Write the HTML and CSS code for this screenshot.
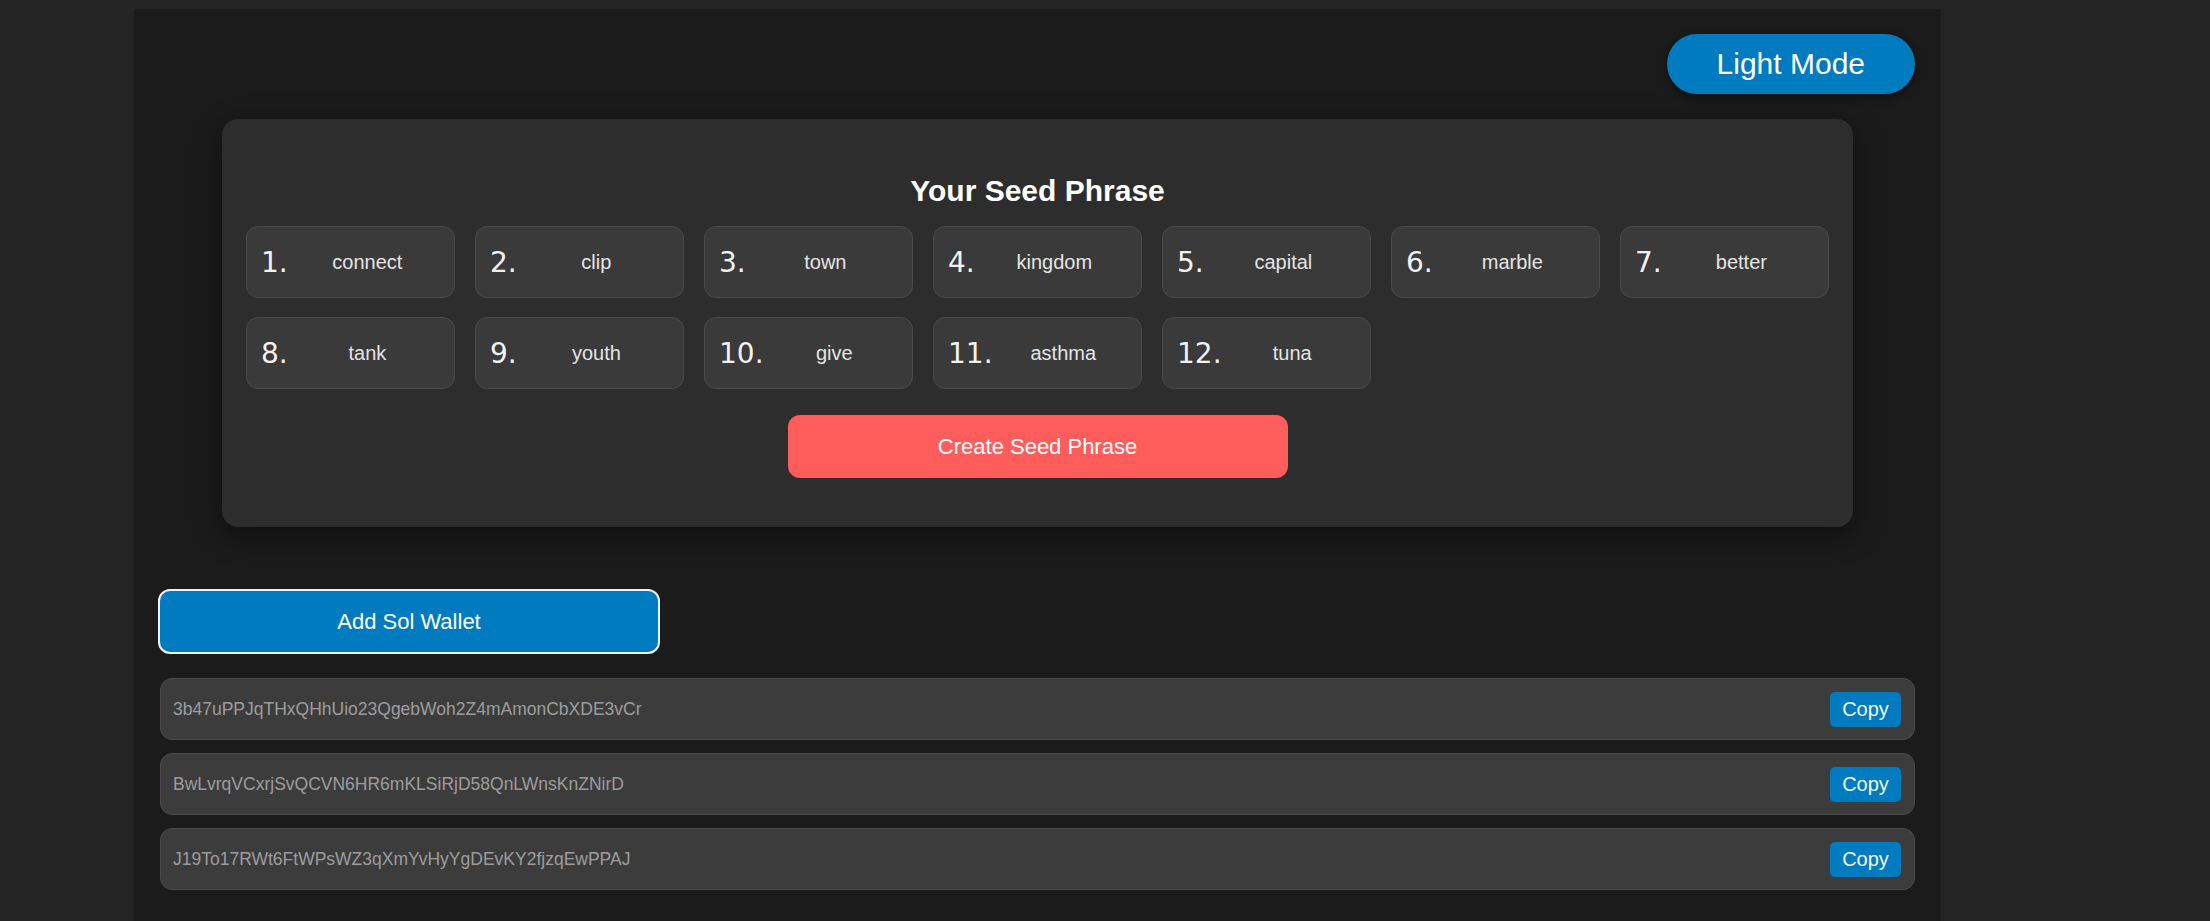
FILE: index.html
```html
<!DOCTYPE html>
<html lang="en">
<head>
<meta charset="utf-8">
<title>Seed Phrase Wallet</title>
<link rel="stylesheet" href="styles.css">
</head>
<body>
<div class="app">
  <div class="topbar">
    <button class="mode-btn">Light Mode</button>
  </div>

  <section class="card">
    <h2 class="title">Your Seed Phrase</h2>
    <div class="grid">
      <div class="word"><span class="num">1.</span><span class="text">connect</span></div>
      <div class="word"><span class="num">2.</span><span class="text">clip</span></div>
      <div class="word"><span class="num">3.</span><span class="text">town</span></div>
      <div class="word"><span class="num">4.</span><span class="text">kingdom</span></div>
      <div class="word"><span class="num">5.</span><span class="text">capital</span></div>
      <div class="word"><span class="num">6.</span><span class="text">marble</span></div>
      <div class="word"><span class="num">7.</span><span class="text">better</span></div>
      <div class="word"><span class="num">8.</span><span class="text">tank</span></div>
      <div class="word"><span class="num">9.</span><span class="text">youth</span></div>
      <div class="word"><span class="num">10.</span><span class="text">give</span></div>
      <div class="word"><span class="num">11.</span><span class="text">asthma</span></div>
      <div class="word"><span class="num">12.</span><span class="text">tuna</span></div>
    </div>
    <button class="create-btn">Create Seed Phrase</button>
  </section>

  <section class="wallets">
    <button class="add-btn">Add Sol Wallet</button>
    <div class="addr-list">
      <div class="addr-row"><span class="addr">3b47uPPJqTHxQHhUio23QgebWoh2Z4mAmonCbXDE3vCr</span><button class="copy-btn">Copy</button></div>
      <div class="addr-row"><span class="addr">BwLvrqVCxrjSvQCVN6HR6mKLSiRjD58QnLWnsKnZNirD</span><button class="copy-btn">Copy</button></div>
      <div class="addr-row"><span class="addr">J19To17RWt6FtWPsWZ3qXmYvHyYgDEvKY2fjzqEwPPAJ</span><button class="copy-btn">Copy</button></div>
    </div>
  </section>
</div>
</body>
</html>
```

FILE: styles.css
```css
html, body {
  margin: 0;
  padding: 0;
}

body {
  background: #242424;
  font-family: "Liberation Sans", Arial, sans-serif;
  color: #fff;
  overflow: hidden;
}

button {
  font-family: inherit;
  cursor: pointer;
}

.app {
  box-sizing: border-box;
  margin: 9px 0 0 134px;
  width: 1807px;
  min-height: 912px;
  padding: 25px 26px 30px;
  background: #1b1b1b;
}

.topbar {
  display: flex;
  justify-content: flex-end;
}

.mode-btn {
  height: 60px;
  padding: 0 50px;
  border: none;
  border-radius: 30px;
  background: #007bc0;
  color: #fff;
  font-size: 30px;
  box-shadow: 0 3px 10px rgba(0, 0, 0, 0.45);
}

.card {
  margin: 25px 62px 0;
  padding: 24px 24px 49px;
  background: #2d2d2d;
  border-radius: 16px;
  box-shadow: 0 8px 30px rgba(0, 0, 0, 0.45);
}

.title {
  margin: 30px 0 17px;
  font-size: 30px;
  line-height: 36px;
  font-weight: 700;
  text-align: center;
  color: #fff;
}

.grid {
  display: grid;
  grid-template-columns: repeat(7, 1fr);
  gap: 19px 20px;
}

.word {
  box-sizing: border-box;
  height: 72px;
  display: flex;
  align-items: center;
  padding: 0 14px;
  background: #3a3a3a;
  border: 1px solid #4a4a4a;
  border-radius: 12px;
}

.num {
  margin-right: 7px;
  font-family: "DejaVu Sans", sans-serif;
  font-size: 28px;
  color: #f2f2f2;
}

.text {
  flex: 1;
  text-align: center;
  font-size: 20px;
  color: #e4e4e4;
}

.create-btn {
  display: block;
  margin: 26px auto 0;
  width: 500px;
  height: 63px;
  border: none;
  border-radius: 12px;
  background: #ff5c5c;
  color: #fff;
  font-size: 22px;
}

.wallets {
  margin-top: 62px;
}

.add-btn {
  display: block;
  width: 502px;
  height: 65px;
  margin-left: -2px;
  border: 2px solid #f2f2f2;
  border-radius: 12px;
  background: #007bc0;
  color: #fff;
  font-size: 22px;
}

.addr-list {
  display: flex;
  flex-direction: column;
  gap: 13px;
  margin-top: 24px;
}

.addr-row {
  box-sizing: border-box;
  height: 62px;
  display: flex;
  align-items: center;
  justify-content: space-between;
  padding: 0 13px 0 12px;
  background: #3c3c3c;
  border: 1px solid #4a4a4a;
  border-radius: 12px;
}

.addr {
  font-size: 17.5px;
  color: #9c9c9c;
}

.copy-btn {
  width: 71px;
  height: 35px;
  padding: 0;
  border: none;
  border-radius: 5px;
  background: #007bc0;
  color: #f4f8fc;
  font-size: 20px;
}
```
